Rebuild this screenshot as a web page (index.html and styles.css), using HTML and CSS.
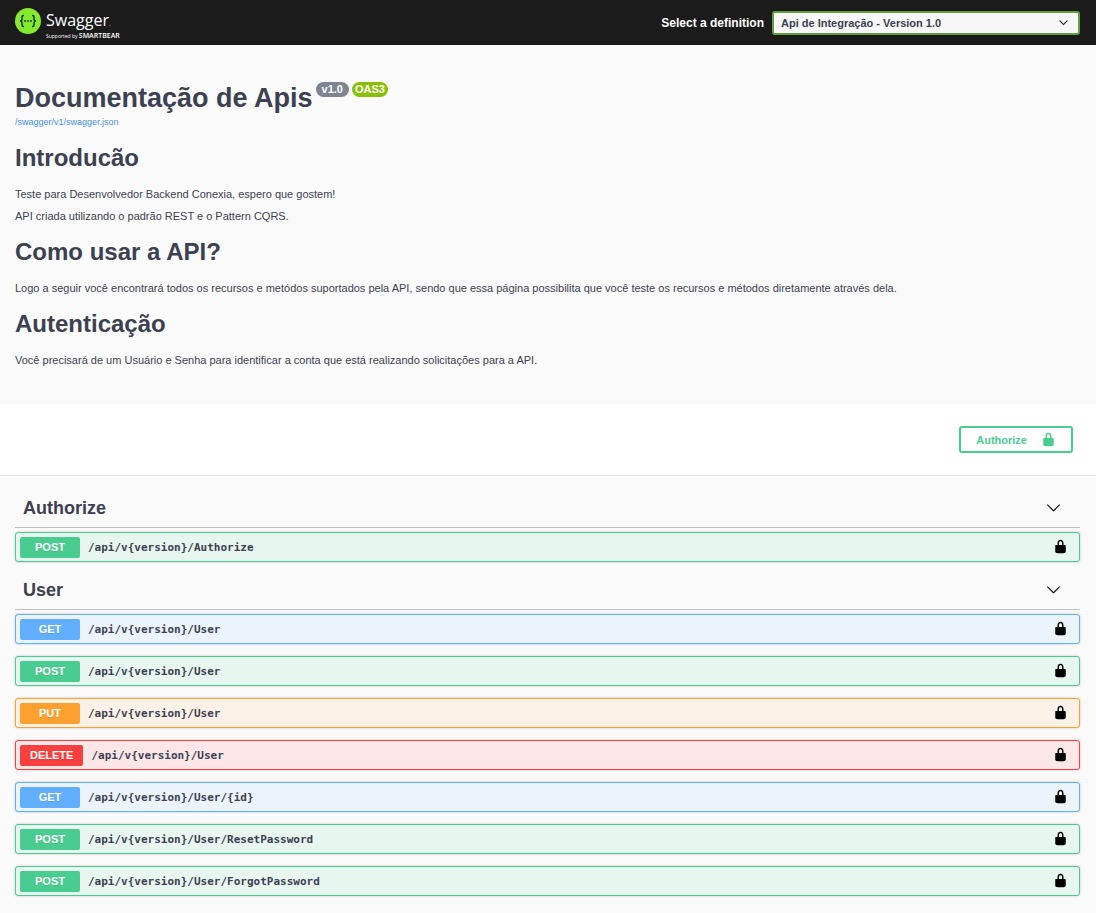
FILE: index.html
```html
<!DOCTYPE html>
<html lang="pt-BR">
<head>
<meta charset="utf-8">
<meta name="viewport" content="width=device-width, initial-scale=1">
<title>Swagger UI</title>
<link rel="stylesheet" href="styles.css">
</head>
<body>
<svg class="defs" aria-hidden="true">
  <symbol id="lock" viewBox="0 0 20 20"><path d="M15.8 8H14V5.6C14 2.703 12.665 1 10 1 7.334 1 6 2.703 6 5.6V8H4c-.553 0-1 .646-1 1.199V17c0 .549.428 1.139.951 1.307l1.197.387C5.672 18.861 6.55 19 7.1 19h5.8c.549 0 1.428-.139 1.951-.307l1.196-.387c.524-.167.953-.757.953-1.306V9.199C17 8.646 16.352 8 15.8 8zM12 8H8V5.199C8 3.754 8.797 3 10 3c1.203 0 2 .754 2 2.199V8z"/></symbol>
  <symbol id="arrow" viewBox="0 0 20 20"><path d="M17.418 6.109c.272-.268.709-.268.979 0s.271.701 0 .969l-7.908 7.83c-.27.268-.707.268-.979 0l-7.908-7.83c-.27-.268-.27-.701 0-.969.271-.268.709-.268.979 0L10 13.25l7.418-7.141z"/></symbol>
</svg>
<header class="topbar">
  <a class="brand" href="#">
    <svg class="brand-mark" viewBox="0 0 26 26" aria-hidden="true">
      <circle cx="13" cy="13" r="13" fill="#85ea2d"/>
      <g fill="none" stroke="#173647" stroke-width="1.5">
        <path d="M9 7.4H8.4Q7 7.4 7 8.9V11Q7 13 5 13Q7 13 7 15V17.1Q7 18.6 8.4 18.6H9"/>
        <path d="M17 7.4H17.6Q19 7.4 19 8.9V11Q19 13 21 13Q19 13 19 15V17.1Q19 18.6 17.6 18.6H17"/>
      </g>
      <g fill="#173647"><circle cx="10" cy="13" r=".9"/><circle cx="13" cy="13" r=".9"/><circle cx="16" cy="13" r=".9"/></g>
    </svg>
    <span class="brand-text">
      <span class="brand-name">Swagger<span class="brand-dot">.</span></span>
      <span class="brand-sub">Supported by <b>SMARTBEAR</b></span>
    </span>
  </a>
  <div class="definition">
    <label for="definition">Select a definition</label>
    <div class="select-wrap">
      <select id="definition"><option>Api de Integração - Version 1.0</option></select>
      <svg viewBox="0 0 20 20" aria-hidden="true"><use href="#arrow"/></svg>
    </div>
  </div>
</header>
<main>
  <section class="info">
    <div class="title-row">
      <h1 class="title">Documentação de Apis</h1>
      <span class="pill">v1.0</span>
      <span class="pill pill-oas">OAS3</span>
    </div>
    <a class="spec-link" href="#">/swagger/v1/swagger.json</a>
    <div class="description">
      <h2>Introducão</h2>
      <p>Teste para Desenvolvedor Backend Conexia, espero que gostem!</p>
      <p>API criada utilizando o padrão REST e o Pattern CQRS.</p>
      <h2>Como usar a API?</h2>
      <p>Logo a seguir você encontrará todos os recursos e metódos suportados pela API, sendo que essa página possibilita que você teste os recursos e métodos diretamente através dela.</p>
      <h2>Autenticação</h2>
      <p>Você precisará de um Usuário e Senha para identificar a conta que está realizando solicitações para a API.</p>
    </div>
  </section>
  <section class="scheme">
    <button class="authorize" type="button"><span>Authorize</span><svg class="icon"><use href="#lock"/></svg></button>
  </section>
  <section class="tag">
    <h3 class="tag-head"><span>Authorize</span><button class="icon-btn" type="button" aria-label="Collapse Authorize"><svg class="icon"><use href="#arrow"/></svg></button></h3>
    <div class="ops">
      <div class="op post"><button class="op-main" type="button"><span class="method">POST</span><span class="path">/api/v{version}/Authorize</span></button><button class="icon-btn" type="button" aria-label="Authorization"><svg class="icon"><use href="#lock"/></svg></button></div>
    </div>
  </section>
  <section class="tag">
    <h3 class="tag-head"><span>User</span><button class="icon-btn" type="button" aria-label="Collapse User"><svg class="icon"><use href="#arrow"/></svg></button></h3>
    <div class="ops">
      <div class="op get"><button class="op-main" type="button"><span class="method">GET</span><span class="path">/api/v{version}/User</span></button><button class="icon-btn" type="button" aria-label="Authorization"><svg class="icon"><use href="#lock"/></svg></button></div>
      <div class="op post"><button class="op-main" type="button"><span class="method">POST</span><span class="path">/api/v{version}/User</span></button><button class="icon-btn" type="button" aria-label="Authorization"><svg class="icon"><use href="#lock"/></svg></button></div>
      <div class="op put"><button class="op-main" type="button"><span class="method">PUT</span><span class="path">/api/v{version}/User</span></button><button class="icon-btn" type="button" aria-label="Authorization"><svg class="icon"><use href="#lock"/></svg></button></div>
      <div class="op delete"><button class="op-main" type="button"><span class="method">DELETE</span><span class="path">/api/v{version}/User</span></button><button class="icon-btn" type="button" aria-label="Authorization"><svg class="icon"><use href="#lock"/></svg></button></div>
      <div class="op get"><button class="op-main" type="button"><span class="method">GET</span><span class="path">/api/v{version}/User/{id}</span></button><button class="icon-btn" type="button" aria-label="Authorization"><svg class="icon"><use href="#lock"/></svg></button></div>
      <div class="op post"><button class="op-main" type="button"><span class="method">POST</span><span class="path">/api/v{version}/User/ResetPassword</span></button><button class="icon-btn" type="button" aria-label="Authorization"><svg class="icon"><use href="#lock"/></svg></button></div>
      <div class="op post"><button class="op-main" type="button"><span class="method">POST</span><span class="path">/api/v{version}/User/ForgotPassword</span></button><button class="icon-btn" type="button" aria-label="Authorization"><svg class="icon"><use href="#lock"/></svg></button></div>
    </div>
  </section>
</main>
</body>
</html>
```
FILE: styles.css
```css
* { box-sizing: border-box; }
body {
  margin: 0;
  background: #fafafa;
  color: #3b4151;
  font-family: "Liberation Sans", Arial, sans-serif;
}
button, select { font-family: inherit; color: inherit; }
button { margin: 0; padding: 0; border: 0; background: none; cursor: pointer; }
h1, h2, h3, p { margin: 0; }
.defs { display: none; }
.icon { display: block; width: 15px; height: 15px; fill: currentColor; }
.icon-btn { color: #000; }

.topbar {
  display: flex;
  align-items: center;
  justify-content: space-between;
  height: 45px;
  padding: 0 16px 0 15px;
  background: #1b1b1b;
}
.brand {
  display: flex;
  gap: 5px;
  height: 30px;
  color: #fff;
  text-decoration: none;
  font-family: "Open Sans", sans-serif;
}
.brand-mark { width: 26px; height: 26px; }
.brand-text { display: flex; flex-direction: column; padding-top: 4px; }
.brand-name { font-size: 16px; line-height: 16px; }
.brand-dot { font-size: 6px; }
.brand-sub { font-size: 5px; line-height: 8px; white-space: nowrap; }
.brand-sub b { font-size: 7px; font-weight: 600; }
.definition { display: flex; align-items: center; gap: 8px; }
.definition label { color: #fff; font-size: 12px; font-weight: 700; }
.select-wrap { position: relative; width: 308px; }
.select-wrap select {
  display: block;
  width: 100%;
  height: 24px;
  padding: 0 24px 0 7px;
  border: 2px solid #62a03f;
  border-radius: 3px;
  background: #f7f7f7;
  appearance: none;
  font-size: 11px;
  font-weight: 700;
}
.select-wrap svg {
  position: absolute;
  top: 7px;
  right: 12px;
  width: 9px;
  height: 9px;
  stroke: #1b1b1b;
  pointer-events: none;
}

.info { padding: 37px 15px; }
.title-row { display: flex; align-items: flex-start; gap: 3px; }
.title { font-size: 27px; line-height: 32px; }
.pill {
  padding: 0 6px;
  border-radius: 8px;
  background: #7d8492;
  color: #fff;
  font-size: 11px;
  line-height: 15px;
  font-weight: 700;
}
.pill-oas { padding: 0 3px; background: #89bf04; }
.spec-link {
  display: block;
  margin-top: 2px;
  color: #4990e2;
  font-size: 9px;
  line-height: 12px;
  text-decoration: none;
}
.description { margin-top: 16px; }
.description h2 { margin-bottom: 15px; font-size: 24px; line-height: 28px; }
.description p { font-size: 11px; line-height: 14px; }
.description p + p { margin-top: 8px; }
.description p + h2 { margin-top: 15px; }

.scheme {
  display: flex;
  justify-content: flex-end;
  margin-bottom: 12px;
  padding: 22px 23px;
  border-bottom: 1px solid #e8e8e8;
  background: #fff;
}
.authorize {
  display: flex;
  align-items: center;
  gap: 14px;
  height: 27px;
  padding: 0 15px;
  border: 2px solid #49cc90;
  border-radius: 3px;
  color: #49cc90;
  font-size: 11px;
  font-weight: 700;
}

.tag { padding: 0 16px 8px 15px; }
.tag-head {
  display: flex;
  align-items: center;
  justify-content: space-between;
  height: 40px;
  margin-bottom: 4px;
  padding: 0 19px 0 8px;
  border-bottom: 1px solid #bfc0c4;
  font-size: 18px;
  line-height: 24px;
}
.ops { display: flex; flex-direction: column; gap: 12px; }
.op {
  display: flex;
  align-items: center;
  padding: 0 11px 0 4px;
  height: 30px;
  border: 1px solid var(--tone);
  border-radius: 3px;
  background: var(--fill);
  box-shadow: 0 0 3px rgba(0, 0, 0, 0.19);
}
.op .icon-btn { padding-bottom: 2px; }
.op-main { display: flex; flex: 1; align-items: center; gap: 8px; }
.method {
  min-width: 60px;
  padding: 0 10px;
  border-radius: 2px;
  background: var(--tone);
  color: #fff;
  font-size: 11px;
  line-height: 21px;
  font-weight: 700;
  text-align: center;
  text-shadow: 0 1px 0 rgba(0, 0, 0, 0.1);
}
.path { font-family: "DejaVu Sans Mono", monospace; font-size: 11px; font-weight: 700; }
.get { --tone: #61affe; --fill: #ebf3fb; }
.post { --tone: #49cc90; --fill: #e8f6f0; }
.put { --tone: #fca130; --fill: #fbf1e6; }
.delete { --tone: #f93e3e; --fill: #fbe7e7; }
```
